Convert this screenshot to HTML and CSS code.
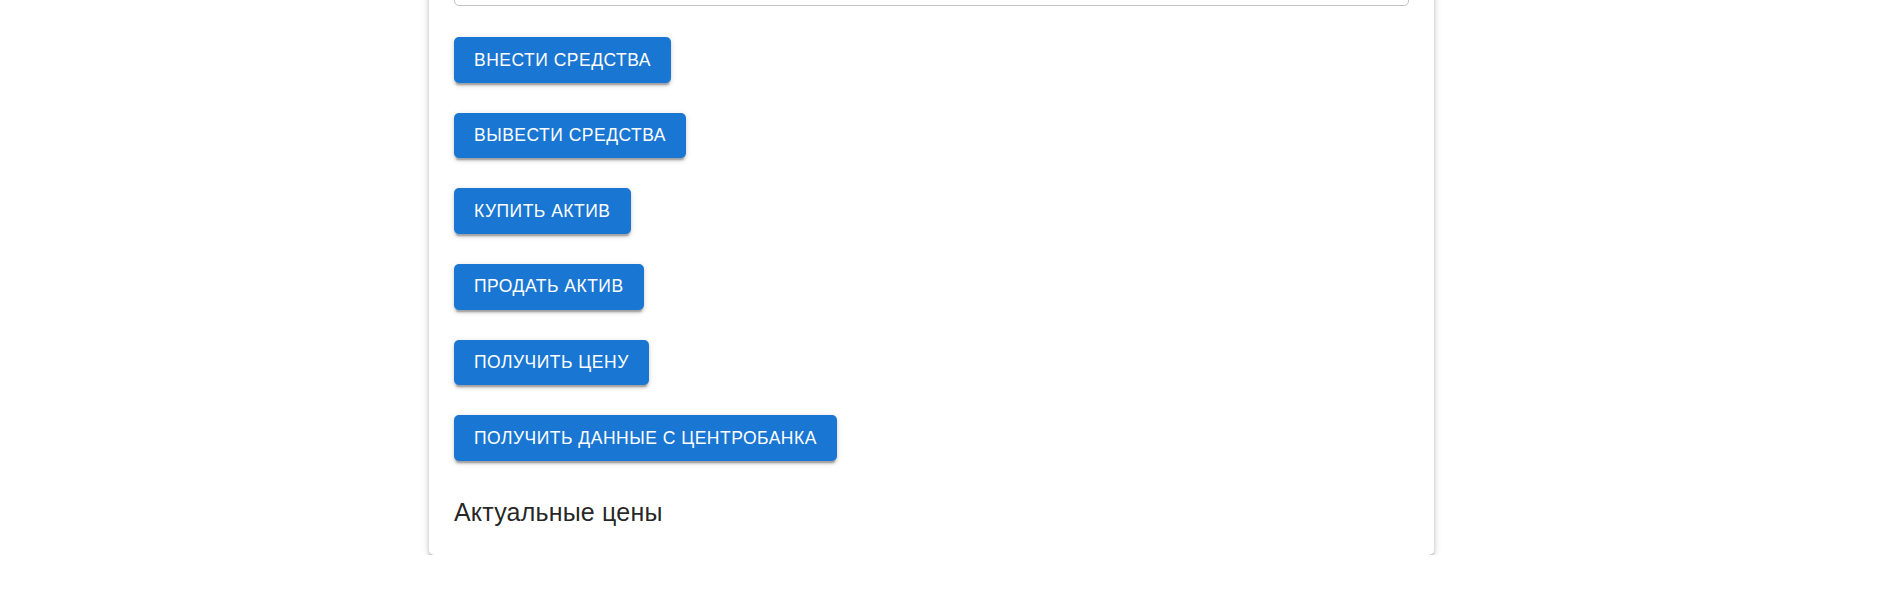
FILE: index.html
```html
<!DOCTYPE html>
<html lang="ru">
<head>
<meta charset="utf-8">
<title>Операции</title>
<link rel="stylesheet" href="styles.css">
</head>
<body>
<div class="page">
  <div class="card">
    <div class="field"></div>
    <div class="actions">
      <button class="btn">Внести средства</button>
      <button class="btn">Вывести средства</button>
      <button class="btn">Купить актив</button>
      <button class="btn">Продать актив</button>
      <button class="btn">Получить цену</button>
      <button class="btn">Получить данные с центробанка</button>
    </div>
    <h6 class="title">Актуальные цены</h6>
  </div>
</div>
</body>
</html>
```
FILE: styles.css
```css
html, body {
  margin: 0;
  padding: 0;
  background: #ffffff;
  font-family: "Liberation Sans", Arial, sans-serif;
  overflow: hidden;
}

.page {
  display: flex;
  justify-content: center;
  padding-right: 19px;
}

.card {
  width: 1005px;
  box-sizing: border-box;
  margin-top: -62px;
  padding: 0 25px 23.5px;
  background: #fff;
  border-radius: 5px;
  box-shadow: 0 3.75px 3.75px -2.5px rgba(0,0,0,0.2),
              0 3.75px 5px 0 rgba(0,0,0,0.14),
              0 1.25px 10px 0 rgba(0,0,0,0.12);
}

.field {
  height: 68px;
  box-sizing: border-box;
  border: 1px solid #c4c4c4;
  border-radius: 5px;
}

.actions {
  display: flex;
  flex-direction: column;
  align-items: flex-start;
  gap: 30px;
  margin-top: 31.2px;
}

.btn {
  font-family: "Liberation Sans", Arial, sans-serif;
  font-size: 17.5px;
  font-weight: 500;
  letter-spacing: 0.5px;
  line-height: 30.6px;
  text-transform: uppercase;
  color: #fff;
  background: #1976d2;
  border: 0;
  border-radius: 5px;
  padding: 7.5px 20px;
  cursor: pointer;
  box-shadow: 0 3.75px 1.25px -2.5px rgba(0,0,0,0.2),
              0 2.5px 2.5px 0 rgba(0,0,0,0.14),
              0 1.25px 6.25px 0 rgba(0,0,0,0.12);
}

.title {
  margin: 30.9px 0 0;
  font-size: 25px;
  font-weight: 500;
  line-height: 40px;
  letter-spacing: 0.19px;
  color: rgba(0,0,0,0.87);
}
```
